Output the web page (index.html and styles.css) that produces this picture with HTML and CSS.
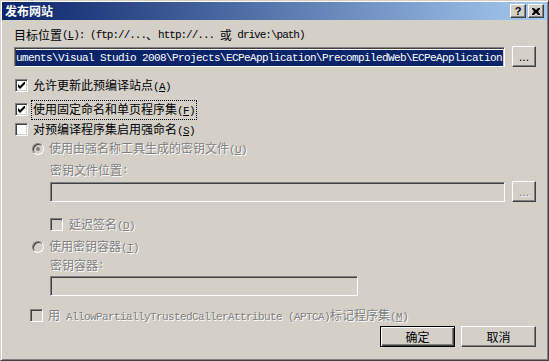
FILE: index.html
```html
<!DOCTYPE html>
<html lang="zh-CN">

<head>
    <meta charset="UTF-8">
    <title>发布网站</title>
    <link rel="stylesheet" href="styles.css">
</head>

<body>
    <div class="window">
        <header class="titlebar">
            <span class="title">发布网站</span>
            <div class="caption-buttons">
                <div class="cap">?</div>
                <div class="cap">
                    <svg width="8" height="7" viewBox="0 0 8 7">
                        <path d="M0 0h2l2 2 2-2h2v1l-2 2.5 2 2.5v1h-2l-2-2-2 2h-2v-1l2-2.5-2-2.5z" fill="#000" />
                    </svg>
                </div>
            </div>
        </header>

        <div class="body">
            <div class="row text-row r-target">目标位置<span class="mono tight">(<u>L</u>): (ftp://...</span>、<span class="mono tight">http://... </span>或<span class="mono tight"> drive:\path)</span></div>

            <div class="row field-row r-path">
                <div class="field path-field">
                    <div class="selection mono">uments\Visual Studio 2008\Projects\ECPeApplication\PrecompiledWeb\ECPeApplication</div>
                </div>
                <div class="btn small">...</div>
            </div>

            <div class="row check-row r-allow">
                <div class="chk"><svg width="7" height="7" viewBox="0 0 7 7"><path d="M0 2v3l2 2 5-5v-3l-5 5z" fill="#000" /></svg></div>
                <span>允许更新此预编译站点<span class="mono">(<u>A</u>)</span></span>
            </div>

            <div class="row check-row r-fixed">
                <div class="chk"><svg width="7" height="7" viewBox="0 0 7 7"><path d="M0 2v3l2 2 5-5v-3l-5 5z" fill="#000" /></svg></div>
                <span class="focus">使用固定命名和单页程序集<span class="mono">(<u>F</u>)</span></span>
            </div>

            <div class="row check-row r-strong">
                <div class="chk"></div>
                <span>对预编译程序集启用强命名<span class="mono">(<u>S</u>)</span></span>
            </div>

            <div class="row radio-row r-keyfile">
                <div class="radio checked"></div>
                <span class="disabled">使用由强名称工具生成的密钥文件<span class="mono">(<u>U</u>)</span></span>
            </div>

            <div class="row text-row sub r-keylabel disabled">密钥文件位置<span class="mono">:</span></div>

            <div class="row field-row sub r-keyfield">
                <div class="field off keyfile-field"></div>
                <div class="btn small disabled">...</div>
            </div>

            <div class="row check-row sub r-delay">
                <div class="chk off"></div>
                <span class="disabled">延迟签名<span class="mono">(<u>D</u>)</span></span>
            </div>

            <div class="row radio-row r-container">
                <div class="radio"></div>
                <span class="disabled">使用密钥容器<span class="mono">(<u>T</u>)</span></span>
            </div>

            <div class="row text-row sub r-containerlabel disabled">密钥容器<span class="mono">:</span></div>

            <div class="row field-row sub r-containerfield">
                <div class="field off container-field"></div>
            </div>

            <div class="row check-row r-aptca">
                <div class="chk off"></div>
                <span class="disabled">用<span class="mono"> AllowPartiallyTrustedCallerAttribute (APTCA)</span>标记程序集<span class="mono">(<u>M</u>)</span></span>
            </div>

            <div class="row actions">
                <div class="btn default">确定</div>
                <div class="btn">取消</div>
            </div>
        </div>
    </div>
</body>

</html>
```

FILE: styles.css
```css
body {
    margin: 0;
    font-family: "Noto Sans CJK SC", sans-serif;
    font-size: 12px;
    color: #000;
    background: #D4D0C8;
}

.window {
    width: 549px;
    height: 361px;
    box-sizing: border-box;
    background: #D4D0C8;
    border: 1px solid;
    border-color: #D4D0C8 #404040 #404040 #D4D0C8;
    box-shadow: inset 1px 1px #fff, inset -1px -1px #808080;
    padding: 1px;
    display: flex;
    flex-direction: column;
}

.titlebar {
    height: 18px;
    flex: none;
    background: linear-gradient(to right, #0A246A, #A6CAF0);
    display: flex;
    align-items: center;
    justify-content: space-between;
    padding: 0 3px 0 3px;
}

.title {
    color: #fff;
    font-weight: bold;
    line-height: 14px;
}

.caption-buttons {
    display: flex;
    gap: 2px;
}

.cap {
    width: 16px;
    height: 14px;
    box-sizing: border-box;
    background: #D4D0C8;
    border: 1px solid;
    border-color: #fff #404040 #404040 #fff;
    box-shadow: inset -1px -1px #808080;
    display: flex;
    align-items: center;
    justify-content: center;
    font-family: "Liberation Sans", sans-serif;
    font-weight: bold;
    font-size: 11px;
    line-height: 10px;
}

.body {
    padding: 0 11px 0 12px;
    display: flex;
    flex-direction: column;
}

.row {
    display: flex;
    align-items: center;
    flex: none;
}

.mono {
    font-family: "Liberation Mono", monospace;
    font-size: 11px;
    letter-spacing: -0.6px;
    white-space: pre;
}

.mono.tight {
    letter-spacing: -1px;
}

u {
    text-decoration: underline;
    text-underline-offset: 1px;
}

.text-row {
    height: 14px;
    line-height: 14px;
    white-space: nowrap;
}

.sub {
    padding-left: 36px;
}

.disabled {
    color: #808080;
    text-shadow: 1px 1px 0 #fff;
}

/* text fields */
.field {
    height: 20px;
    box-sizing: border-box;
    background: #fff;
    border: 1px solid;
    border-color: #808080 #fff #fff #808080;
    box-shadow: inset 1px 1px #404040, inset -1px -1px #D4D0C8;
    padding: 2px 1px 2px 1px;
    overflow: hidden;
}

.field.off {
    background: #D4D0C8;
}

.path-field {
    width: 491px;
}

.keyfile-field {
    width: 455px;
}

.container-field {
    width: 308px;
}

.selection {
    height: 16px;
    background: #0A246A;
    color: #fff;
    line-height: 16px;
    white-space: nowrap;
    overflow: hidden;
}

.field-row {
    gap: 7px;
    height: 21px;
}

/* buttons */
.btn {
    width: 75px;
    height: 21px;
    box-sizing: border-box;
    background: #D4D0C8;
    border: 1px solid;
    border-color: #fff #404040 #404040 #fff;
    box-shadow: inset -1px -1px #808080;
    display: flex;
    align-items: center;
    justify-content: center;
    line-height: 14px;
}

.btn.small {
    width: 24px;
    font-family: "Liberation Sans", sans-serif;
    padding-bottom: 2px;
    align-items: flex-end;
}

.btn.default {
    border-color: #000;
    box-shadow: inset 1px 1px #fff, inset -1px -1px #404040, inset -2px -2px #808080;
}

/* checkboxes and radios */
.check-row,
.radio-row {
    white-space: nowrap;
    line-height: 14px;
}

.chk {
    width: 13px;
    height: 13px;
    box-sizing: border-box;
    flex: none;
    background: #fff;
    border: 1px solid;
    border-color: #808080 #fff #fff #808080;
    box-shadow: inset 1px 1px #404040, inset -1px -1px #D4D0C8;
    display: flex;
    align-items: center;
    justify-content: center;
}

.chk.off {
    background: #D4D0C8;
}

.check-row {
    height: 13px;
    gap: 5px;
    padding-left: 1px;
}

.radio-row {
    height: 12px;
    gap: 5px;
    padding-left: 18px;
}

.radio {
    width: 12px;
    height: 12px;
    box-sizing: border-box;
    flex: none;
    border-radius: 50%;
    border: 1px solid;
    border-color: #808080 #fff #fff #808080;
    box-shadow: inset 1px 1px #404040;
    background: #D4D0C8;
    display: flex;
    align-items: center;
    justify-content: center;
}

.radio.checked::after {
    content: "";
    width: 4px;
    height: 4px;
    border-radius: 50%;
    background: #808080;
}

.focus {
    outline: 1px dotted #000;
    outline-offset: 1px;
}

/* vertical rhythm */
.r-target { margin-top: 8px; }
.r-path { margin-top: 4px; }
.r-allow { margin-top: 12px; }
.r-fixed { margin-top: 11px; }
.r-strong { margin-top: 7px; }
.r-keyfile { margin-top: 7px; }
.r-keylabel { margin-top: 8px; }
.r-keyfield { margin-top: 4px; }
.r-delay { margin-top: 16px; padding-left: 36px; gap: 6px; }
.r-container { margin-top: 10px; }
.r-containerlabel { margin-top: 5px; }
.r-containerfield { margin-top: 3px; }
.r-aptca { margin-top: 13px; padding-left: 16px; }

.actions {
    margin-top: 4px;
    justify-content: flex-end;
    gap: 6px;
}
```
